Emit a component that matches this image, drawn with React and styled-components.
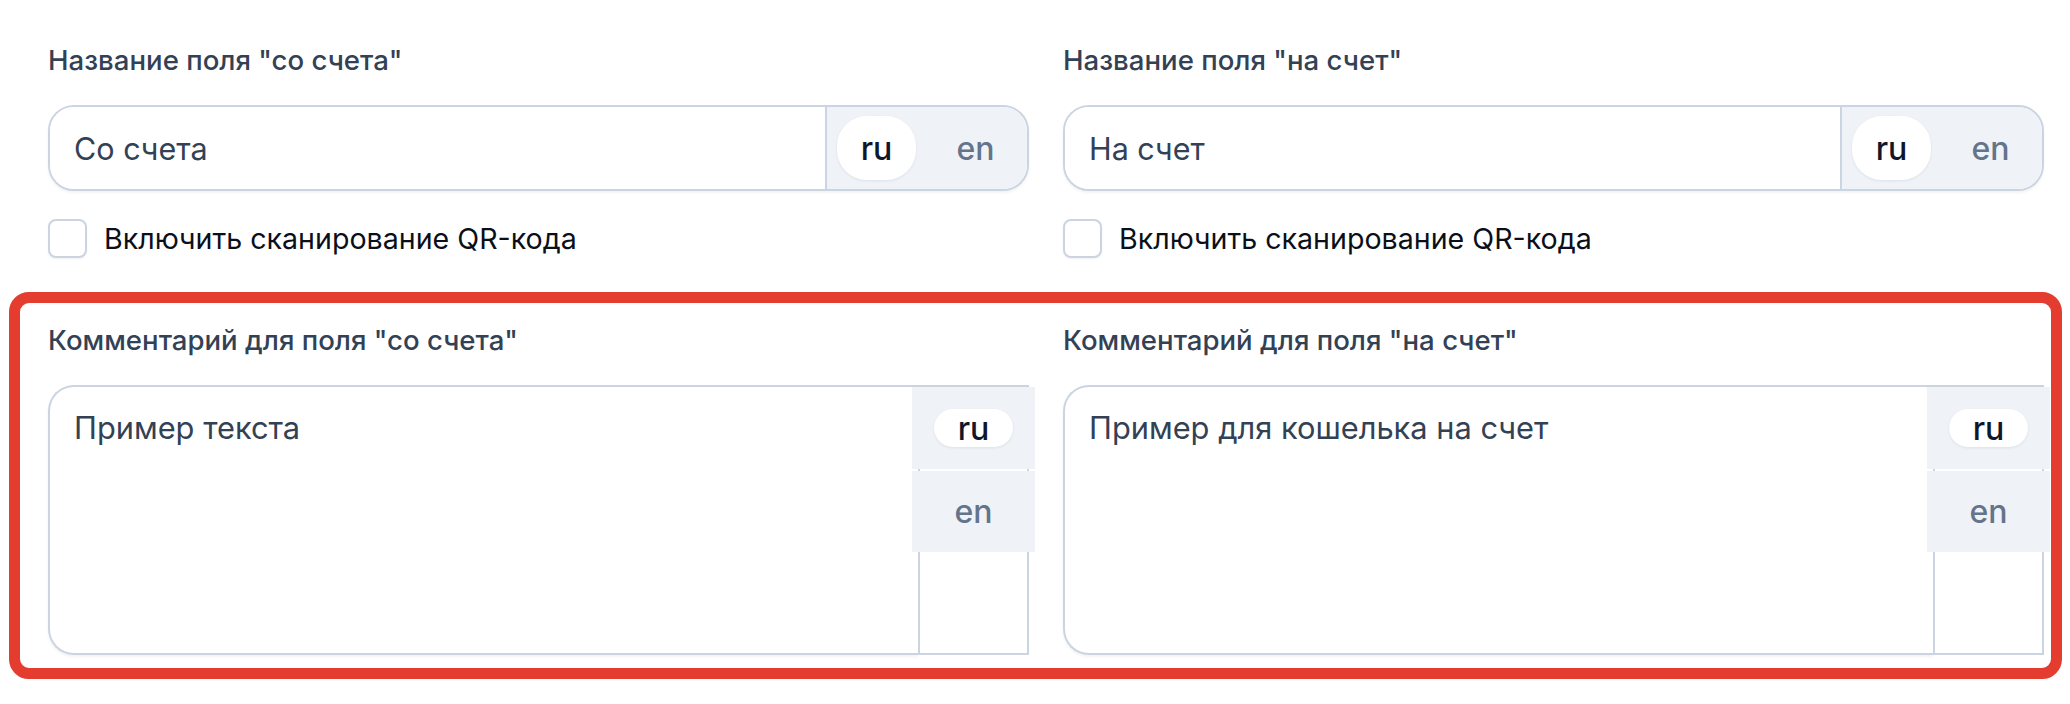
import React from "react";
import styled, { createGlobalStyle } from "styled-components";

const GlobalStyle = createGlobalStyle`
  html, body { margin: 0; padding: 0; background: #ffffff; }
  body { font-family: Inter, "Noto Sans", sans-serif; -webkit-font-smoothing: antialiased; }
  * { box-sizing: border-box; }
`;

const Page = styled.div`
  width: 2070px;
  padding-top: 40px;
`;

const TopSection = styled.div`
  padding-left: 48px;
`;

const Columns = styled.div`
  display: grid;
  grid-template-columns: 981px 981px;
  column-gap: 34px;
`;

const Field = styled.div`
  display: flex;
  flex-direction: column;
`;

const Label = styled.div`
  font-size: 27.6px;
  line-height: 40px;
  font-weight: 500;
  color: #334155;
  margin-bottom: 25px;
  white-space: nowrap;
`;

const InputGroup = styled.div`
  display: flex;
  height: 86px;
  border: 2px solid #cbd5e1;
  border-radius: 26px;
  overflow: hidden;
  background: #ffffff;
  box-shadow: 0 2px 3px rgba(15, 23, 42, 0.05);
`;

const TextInput = styled.input`
  flex: 1;
  min-width: 0;
  border: none;
  outline: none;
  padding: 0 24px;
  font-family: inherit;
  font-size: 30.5px;
  color: #334155;
  background: #ffffff;
`;

const LangSwitch = styled.div`
  display: flex;
  align-items: center;
  gap: 20px;
  padding: 0 12px 0 10px;
  background: #eff3f8;
  border-left: 2px solid #cbd5e1;
`;

const LangButton = styled.div`
  width: 79px;
  height: ${(p) => (p.$compact ? "38px" : "64px")};
  border-radius: ${(p) => (p.$compact ? "19px" : "30px")};
  display: flex;
  align-items: center;
  justify-content: center;
  font-size: 32px;
  font-weight: 500;
  color: ${(p) => (p.$active ? "#0f172a" : "#64748b")};
  background: ${(p) => (p.$active ? "#ffffff" : "transparent")};
  box-shadow: ${(p) => (p.$active ? "0 1px 3px rgba(15, 23, 42, 0.08)" : "none")};
`;

const CheckRow = styled.label`
  display: flex;
  align-items: center;
  gap: 17px;
  margin-top: 28px;
  height: 39px;
`;

const CheckBox = styled.span`
  width: 39px;
  height: 39px;
  border: 2px solid #cbd5e1;
  border-radius: 8px;
  background: #ffffff;
  box-shadow: 0 1px 2px rgba(15, 23, 42, 0.06);
`;

const CheckText = styled.span`
  font-size: 28.6px;
  font-weight: 400;
  color: #0b0f19;
  white-space: nowrap;
`;

const Highlight = styled.section`
  margin-top: 34px;
  margin-left: 9px;
  width: 2053px;
  border: 11px solid #e43d30;
  border-radius: 20px;
  padding: 17px 0 13px 28px;
`;

const TextareaGroup = styled.div`
  display: flex;
  height: 270px;
`;

const TextArea = styled.textarea`
  width: 870px;
  height: 100%;
  resize: none;
  outline: none;
  border: 2px solid #cbd5e1;
  border-right: none;
  border-radius: 26px 0 0 26px;
  padding: 18px 24px;
  font-family: inherit;
  font-size: 30.8px;
  line-height: 1.5;
  color: #334155;
  background: #ffffff;
  box-shadow: 0 2px 3px rgba(15, 23, 42, 0.05);
`;

const LangColumn = styled.div`
  width: 111px;
  height: 100%;
  border: 2px solid #cbd5e1;
  display: flex;
  flex-direction: column;
  gap: 2px;
  background: #ffffff;
`;

const LangTab = styled.div`
  height: ${(p) => p.$h}px;
  margin: 0 -8px;
  display: flex;
  align-items: center;
  justify-content: center;
  background: #eff3f8;
`;

function NameField({ label, value }) {
  return (
    <Field>
      <Label>{label}</Label>
      <InputGroup>
        <TextInput defaultValue={value} readOnly />
        <LangSwitch>
          <LangButton $active>ru</LangButton>
          <LangButton>en</LangButton>
        </LangSwitch>
      </InputGroup>
      <CheckRow>
        <CheckBox />
        <CheckText>Включить сканирование QR-кода</CheckText>
      </CheckRow>
    </Field>
  );
}

function CommentField({ label, value }) {
  return (
    <Field>
      <Label>{label}</Label>
      <TextareaGroup>
        <TextArea defaultValue={value} readOnly />
        <LangColumn>
          <LangTab $h={82}>
            <LangButton $active $compact>ru</LangButton>
          </LangTab>
          <LangTab $h={81}>
            <LangButton $compact>en</LangButton>
          </LangTab>
        </LangColumn>
      </TextareaGroup>
    </Field>
  );
}

export default function App() {
  return (
    <Page>
      <GlobalStyle />
      <TopSection>
        <Columns>
          <NameField label={'Название поля "со счета"'} value="Со счета" />
          <NameField label={'Название поля "на счет"'} value="На счет" />
        </Columns>
      </TopSection>
      <Highlight>
        <Columns>
          <CommentField label={'Комментарий для поля "со счета"'} value="Пример текста" />
          <CommentField label={'Комментарий для поля "на счет"'} value="Пример для кошелька на счет" />
        </Columns>
      </Highlight>
    </Page>
  );
}
